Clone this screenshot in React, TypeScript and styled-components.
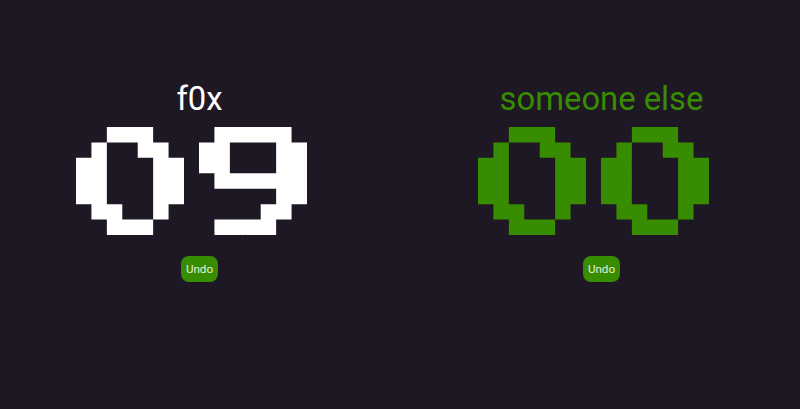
import React from 'react'
import styled, { createGlobalStyle } from 'styled-components'

const GREEN = '#378c00'

const GlobalStyle = createGlobalStyle`
  html, body {
    margin: 0;
    background-color: #1e1724;
  }
`

const Board = styled.div`
  display: flex;
  gap: 155px;
  height: 409px;
  box-sizing: border-box;
  padding: 79px 0 0 76px;
  font-family: Roboto, sans-serif;
`

const PlayerColumn = styled.div`
  width: 247px;
  display: flex;
  flex-direction: column;
  align-items: center;
`

const PlayerName = styled.div<{ $color: string }>`
  font-size: 32.8px;
  line-height: 40px;
  margin-bottom: 8px;
  white-space: nowrap;
  color: ${(p) => p.$color};
`

const ScoreRow = styled.div`
  display: flex;
  width: 100%;
`

const DigitSvg = styled.svg`
  display: block;
  width: 123.43px;
  height: 108px;
  flex: none;
`

const UndoButton = styled.button`
  margin-top: 21px;
  height: 26px;
  width: 37px;
  padding: 0;
  border: none;
  border-radius: 8px;
  background-color: ${GREEN};
  color: #e6f0dc;
  font-family: inherit;
  font-size: 11.6px;
`

// 7x7 pixel font, every digit also keeps one empty column on its right
const GLYPHS: Record<string, string[]> = {
  '0': [
    '..###..',
    '.#..##.',
    '##...##',
    '##...##',
    '##...##',
    '.##..#.',
    '..###..',
  ],
  '9': [
    '.#####.',
    '##...##',
    '##...##',
    '.######',
    '.....##',
    '....##.',
    '.####..',
  ],
}

const glyphPath = (rows: string[]) =>
  rows
    .map((row, y) =>
      row
        .split('')
        .map((c, x) => (c === '#' ? `M${x} ${y}h1v1h-1z` : ''))
        .join(''),
    )
    .join('')

const Digit: React.FC<{ value: string; color: string }> = ({ value, color }) => (
  <DigitSvg viewBox="0 0 8 7">
    <path d={glyphPath(GLYPHS[value])} fill={color} />
  </DigitSvg>
)

const Player: React.FC<{ name: string; score: string; color: string }> = ({
  name,
  score,
  color,
}) => (
  <PlayerColumn>
    <PlayerName $color={color}>{name}</PlayerName>
    <ScoreRow>
      {score.split('').map((d, i) => (
        <Digit key={i} value={d} color={color} />
      ))}
    </ScoreRow>
    <UndoButton>Undo</UndoButton>
  </PlayerColumn>
)

const App: React.FC = () => (
  <>
    <GlobalStyle />
    <Board>
      <Player name="f0x" score="09" color="#ffffff" />
      <Player name="someone else" score="00" color={GREEN} />
    </Board>
  </>
)

export default App
